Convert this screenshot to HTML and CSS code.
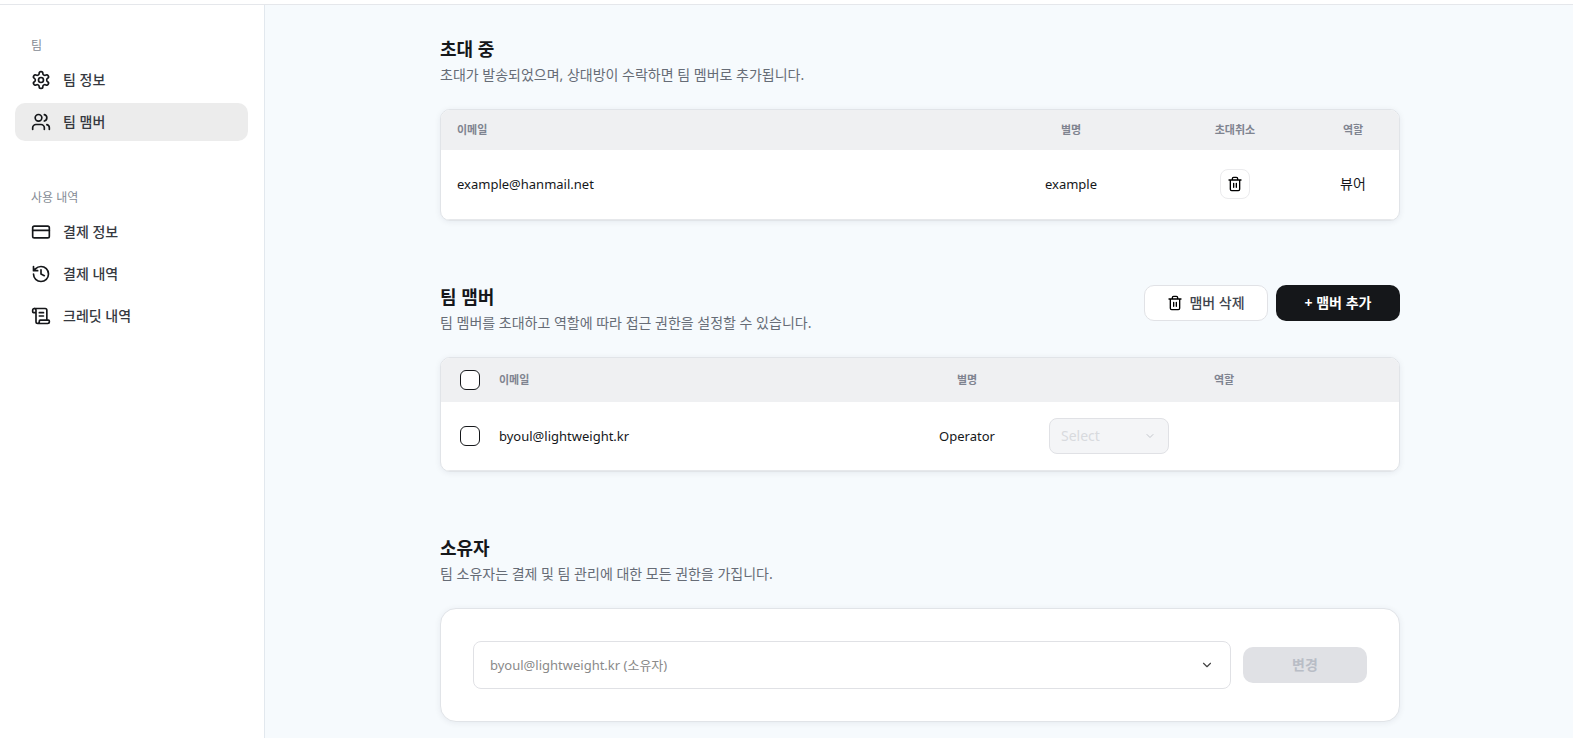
FILE: index.html
```html
<!DOCTYPE html>
<html lang="ko">
<head>
<meta charset="utf-8">
<meta name="viewport" content="width=device-width, initial-scale=1">
<title>팀 맴버</title>
<link rel="stylesheet" href="styles.css">
</head>
<body>
<svg class="sprite" aria-hidden="true">
  <symbol id="trash" viewBox="0 0 24 24"><path d="M3 6h18M19 6v14a2 2 0 0 1-2 2H7a2 2 0 0 1-2-2V6M8 6V4a2 2 0 0 1 2-2h4a2 2 0 0 1 2 2v2M10 11v6M14 11v6"/></symbol>
  <symbol id="chevron" viewBox="0 0 24 24"><path d="m6 9 6 6 6-6"/></symbol>
</svg>
<header class="topbar"></header>
<div class="layout">
  <aside class="sidebar">
    <nav class="nav-group" aria-labelledby="nav-team">
      <h2 class="nav-label" id="nav-team">팀</h2>
      <ul class="nav-list">
        <li><a class="nav-item" href="#info">
          <svg class="icon" viewBox="0 0 24 24"><path d="M12.22 2h-.44a2 2 0 0 0-2 2v.18a2 2 0 0 1-1 1.73l-.43.25a2 2 0 0 1-2 0l-.15-.08a2 2 0 0 0-2.73.73l-.22.38a2 2 0 0 0 .73 2.73l.15.1a2 2 0 0 1 1 1.72v.51a2 2 0 0 1-1 1.74l-.15.09a2 2 0 0 0-.73 2.73l.22.38a2 2 0 0 0 2.73.73l.15-.08a2 2 0 0 1 2 0l.43.25a2 2 0 0 1 1 1.73V20a2 2 0 0 0 2 2h.44a2 2 0 0 0 2-2v-.18a2 2 0 0 1 1-1.73l.43-.25a2 2 0 0 1 2 0l.15.08a2 2 0 0 0 2.73-.73l.22-.39a2 2 0 0 0-.73-2.73l-.15-.08a2 2 0 0 1-1-1.74v-.5a2 2 0 0 1 1-1.74l.15-.09a2 2 0 0 0 .73-2.73l-.22-.38a2 2 0 0 0-2.73-.73l-.15.08a2 2 0 0 1-2 0l-.43-.25a2 2 0 0 1-1-1.73V4a2 2 0 0 0-2-2z"/><circle cx="12" cy="12" r="3"/></svg>
          팀 정보</a></li>
        <li><a class="nav-item active" href="#members" aria-current="page">
          <svg class="icon" viewBox="0 0 24 24"><path d="M16 21v-2a4 4 0 0 0-4-4H6a4 4 0 0 0-4 4v2M22 21v-2a4 4 0 0 0-3-3.87M16 3.13a4 4 0 0 1 0 7.75"/><circle cx="9" cy="7" r="4"/></svg>
          팀 맴버</a></li>
      </ul>
    </nav>
    <nav class="nav-group" aria-labelledby="nav-usage">
      <h2 class="nav-label" id="nav-usage">사용 내역</h2>
      <ul class="nav-list">
        <li><a class="nav-item" href="#billing">
          <svg class="icon" viewBox="0 0 24 24"><rect x="2" y="5" width="20" height="14" rx="2"/><path d="M2 10h20"/></svg>
          결제 정보</a></li>
        <li><a class="nav-item" href="#payments">
          <svg class="icon" viewBox="0 0 24 24"><path d="M3 12a9 9 0 1 0 9-9 9.75 9.75 0 0 0-6.74 2.74L3 8M3 3v5h5M12 7v5l4 2"/></svg>
          결제 내역</a></li>
        <li><a class="nav-item" href="#credits">
          <svg class="icon" viewBox="0 0 24 24"><path d="M15 12h-5M15 8h-5M19 17V5a2 2 0 0 0-2-2H4"/><path d="M8 21h12a2 2 0 0 0 2-2v-1a1 1 0 0 0-1-1H11a1 1 0 0 0-1 1v1a2 2 0 1 1-4 0V5a2 2 0 1 0-4 0v2a1 1 0 0 0 1 1h3"/></svg>
          크레딧 내역</a></li>
      </ul>
    </nav>
  </aside>

  <main class="main">
    <section class="section">
      <div class="section-head">
        <div>
          <h1 class="title">초대 중</h1>
          <p class="desc">초대가 발송되었으며, 상대방이 수락하면 팀 멤버로 추가됩니다.</p>
        </div>
      </div>
      <div class="card">
        <table class="table invites">
          <colgroup><col><col class="col-alias"><col class="col-cancel"><col class="col-role"></colgroup>
          <thead><tr><th class="start">이메일</th><th>별명</th><th>초대취소</th><th>역할</th></tr></thead>
          <tbody><tr>
            <td class="start latin">example@hanmail.net</td>
            <td class="latin">example</td>
            <td><button class="icon-button" type="button" aria-label="초대취소"><svg class="icon-small"><use href="#trash"/></svg></button></td>
            <td>뷰어</td>
          </tr></tbody>
        </table>
      </div>
    </section>

    <section class="section">
      <div class="section-head">
        <div>
          <h1 class="title">팀 맴버</h1>
          <p class="desc">팀 멤버를 초대하고 역할에 따라 접근 권한을 설정할 수 있습니다.</p>
        </div>
        <div class="actions">
          <button class="button outline" type="button"><svg class="icon-small"><use href="#trash"/></svg>맴버 삭제</button>
          <button class="button solid" type="button">+ 맴버 추가</button>
        </div>
      </div>
      <div class="card">
        <table class="table members">
          <colgroup><col class="col-check"><col><col class="col-name"><col class="col-select"></colgroup>
          <thead><tr>
            <th><input class="check" type="checkbox" aria-label="전체 선택"></th>
            <th class="start">이메일</th><th>별명</th><th>역할</th>
          </tr></thead>
          <tbody><tr>
            <td><input class="check" type="checkbox" aria-label="byoul@lightweight.kr"></td>
            <td class="start latin">byoul@lightweight.kr</td>
            <td class="latin">Operator</td>
            <td class="start"><div class="select-wrap role">
              <select class="select" aria-label="역할" disabled><option>Select</option></select>
              <svg class="chevron"><use href="#chevron"/></svg>
            </div></td>
          </tr></tbody>
        </table>
      </div>
    </section>

    <section class="section">
      <div class="section-head">
        <div>
          <h1 class="title">소유자</h1>
          <p class="desc">팀 소유자는 결제 및 팀 관리에 대한 모든 권한을 가집니다.</p>
        </div>
      </div>
      <form class="card owner-card">
        <div class="select-wrap owner">
          <select class="select" aria-label="소유자"><option>byoul@lightweight.kr (소유자)</option></select>
          <svg class="chevron"><use href="#chevron"/></svg>
        </div>
        <button class="button muted" type="submit" disabled>변경</button>
      </form>
    </section>
  </main>
</div>
</body>
</html>
```
FILE: styles.css
```css
* { box-sizing: border-box; }

body {
  margin: 0;
  min-height: 100vh;
  display: flex;
  flex-direction: column;
  background: #f6fafd;
  color: #15171a;
  font: 14px/20px "Noto Sans", "Noto Sans CJK KR", sans-serif;
}

h1, h2, p, ul { margin: 0; padding: 0; }
ul { list-style: none; }
button, select { font: inherit; }

svg {
  fill: none;
  stroke: currentColor;
  stroke-width: 2;
  stroke-linecap: round;
  stroke-linejoin: round;
  flex: none;
}

.sprite { display: none; }
.icon { width: 20px; height: 20px; color: #15171a; }
.icon-small { width: 16px; height: 16px; color: #000; }

.topbar {
  height: 5px;
  background: #fff;
  border-bottom: 1px solid #e5e7eb;
}

.layout { flex: 1; display: flex; }

.sidebar {
  flex: none;
  width: 265px;
  padding: 32px 16px 32px 15px;
  display: flex;
  flex-direction: column;
  gap: 48px;
  background: #fff;
  border-right: 1px solid #e2e8ee;
}

.nav-group { display: flex; flex-direction: column; gap: 6px; }
.nav-label {
  padding: 0 16px;
  font-size: 12px;
  line-height: 18px;
  font-weight: 400;
  color: #868c95;
}
.nav-list { display: flex; flex-direction: column; gap: 4px; }
.nav-item {
  display: flex;
  align-items: center;
  gap: 12px;
  height: 38px;
  padding: 0 16px;
  border-radius: 10px;
  color: #36393f;
  font-weight: 500;
  text-decoration: none;
}
.nav-item.active { background: #ececec; }

.main {
  flex: 1;
  min-width: 0;
  padding: 32px 24px 16px 26px;
  display: flex;
  flex-direction: column;
  align-items: center;
  gap: 64px;
}

.section {
  width: 100%;
  max-width: 960px;
  display: flex;
  flex-direction: column;
  gap: 24px;
}
.section-head {
  display: flex;
  justify-content: space-between;
  align-items: flex-start;
}
.title { font-size: 18px; line-height: 24px; font-weight: 700; }
.desc { margin-top: 4px; color: #666c76; }
.actions { display: flex; gap: 8px; }

.card {
  overflow: hidden;
  background: #fff;
  border: 1px solid #e1e4e8;
  border-radius: 10px;
  box-shadow: 0 1px 6px rgba(20, 30, 50, 0.07);
}

.table { width: 100%; table-layout: fixed; border-collapse: collapse; }
.table th, .table td { padding: 0; text-align: center; vertical-align: middle; }
.table th {
  height: 40px;
  background: #eff0f2;
  color: #7f8490;
  font-size: 11px;
  line-height: 16px;
  font-weight: 700;
}
.table td { height: 69px; border-bottom: 1px solid #e6e8eb; }
.table .start { text-align: left; }
.table .latin { font-size: 13px; }
.invites .start { padding-left: 16px; }
.members th { height: 44px; }
.col-alias { width: 184px; }
.col-cancel { width: 144px; }
.col-role { width: 92px; }
.col-check { width: 58px; }
.col-name { width: 164px; }
.col-select { width: 350px; }

.check {
  appearance: none;
  display: block;
  width: 20px;
  height: 20px;
  margin: 0 auto;
  background: #fff;
  border: 1px solid #15171a;
  border-radius: 6px;
}
.check:checked { background: #15171a; }

.icon-button {
  display: flex;
  align-items: center;
  justify-content: center;
  width: 30px;
  height: 30px;
  margin: 0 auto;
  padding: 0;
  background: #fff;
  border: 1px solid #ebebed;
  border-radius: 8px;
}

.button {
  display: flex;
  align-items: center;
  justify-content: center;
  gap: 6px;
  width: 124px;
  height: 36px;
  padding: 0;
  border: 0;
  border-radius: 10px;
  font-weight: 700;
}
.outline {
  background: #fff;
  border: 1px solid #e1e2e6;
  color: #3f444d;
  font-weight: 500;
}
.solid { background: #15171a; color: #fff; }
.muted { background: #e0e1e5; color: #b9bdc6; }

.select-wrap { position: relative; }
.select {
  appearance: none;
  display: block;
  width: 100%;
  background: #fff;
  border: 1px solid #e0e1e5;
  border-radius: 8px;
}
.chevron { position: absolute; top: 0; bottom: 0; margin: auto 0; pointer-events: none; }
.role { width: 120px; }
.role .select {
  height: 36px;
  padding: 0 11px;
  background: #f4f5f7;
  color: #d8dade;
  opacity: 1;
}
.role .chevron { right: 13px; width: 12px; height: 12px; color: #c3c6cc; }
.owner { flex: 1; min-width: 0; }
.owner .select { height: 48px; padding: 0 16px; font-size: 13px; color: #8a8a8a; }
.owner .chevron { right: 17px; width: 14px; height: 14px; color: #444; }

.owner-card {
  display: flex;
  align-items: center;
  gap: 12px;
  padding: 32px;
  border-radius: 16px;
}
```
